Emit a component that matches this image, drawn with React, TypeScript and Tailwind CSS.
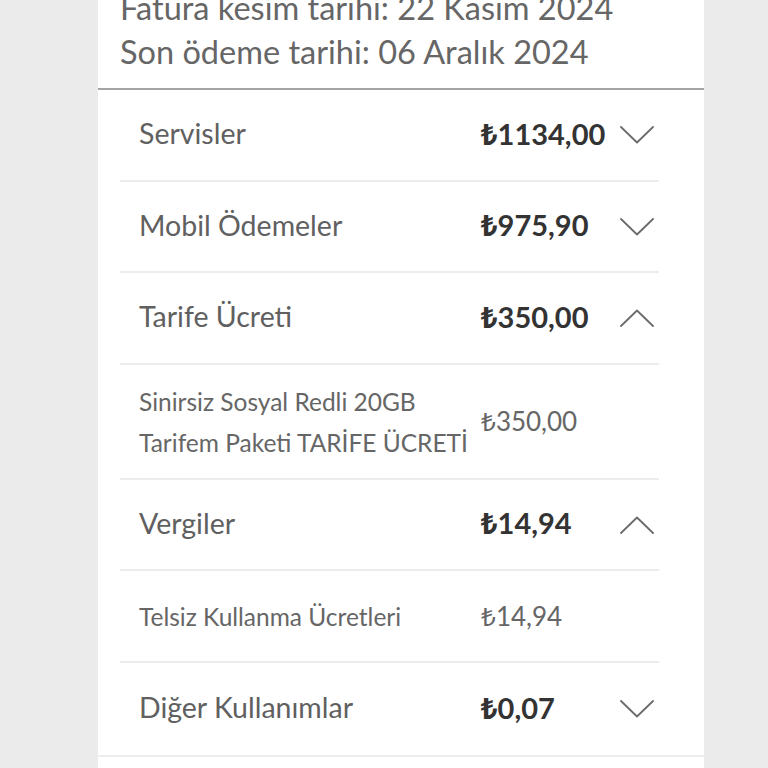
import React from "react";

type Row = {
  label: string;
  amount: string;
  open?: boolean;
  h: string;
  sub?: boolean;
};

const ROWS: Row[] = [
  { label: "Servisler", amount: "1134,00", h: "h-[92px]" },
  { label: "Mobil Ödemeler", amount: "975,90", h: "h-[91px]" },
  { label: "Tarife Ücreti", amount: "350,00", open: true, h: "h-[92px]" },
  { label: "Sinirsiz Sosyal Redli 20GB\nTarifem Paketi TARİFE ÜCRETİ", amount: "350,00", sub: true, h: "h-[115px]" },
  { label: "Vergiler", amount: "14,94", open: true, h: "h-[91px]" },
  { label: "Telsiz Kullanma Ücretleri", amount: "14,94", sub: true, h: "h-[92px]" },
  { label: "Diğer Kullanımlar", amount: "0,07", h: "h-[92px]" },
];

function Chevron({ up }: { up?: boolean }) {
  return (
    <svg width="34" height="18" viewBox="0 0 34 18" fill="none" className="block">
      <path
        d={up ? "M1 17L17 1.5L33 17" : "M1 1L17 16.5L33 1"}
        stroke="#6b6b6b"
        strokeWidth="1.8"
        strokeLinecap="round"
        strokeLinejoin="round"
      />
    </svg>
  );
}

function Lira() {
  return <span className="font-['Noto_Sans',sans-serif]">₺</span>;
}

export default function App() {
  return (
    <div className="h-[768px] overflow-hidden bg-[#ebebeb] font-['Lato','Liberation_Sans',sans-serif]">
      <div className="ml-[98px] w-[606px] min-h-[800px] bg-white">
        {/* Header dates */}
        <div className="-mt-[14px] border-b-2 border-[#a3a3a3] pb-[14px] pl-[22px] text-[32.5px] leading-[44px] text-[#666]">
          <p>Fatura kesim tarihi: 22 Kasım 2024</p>
          <p>Son ödeme tarihi: 06 Aralık 2024</p>
        </div>

        {/* Bill rows */}
        <div className="border-b-2 border-[#ededed]">
          <div className="ml-[22px] mr-[45px]">
            {ROWS.map((r, i) => (
              <div
                key={i}
                className={`grid grid-cols-[361px_1fr_34px] items-center pr-[5px] ${r.h} ${
                  i < ROWS.length - 1 ? "border-b-2 border-[#ececec]" : ""
                }`}
              >
                {r.sub ? (
                  <div className="whitespace-pre-line pl-[19px] text-[24.5px] leading-[41px] text-[#666]">
                    {r.label}
                  </div>
                ) : (
                  <div className="-mt-[3px] pl-[19px] text-[28.5px] text-[#606060]">{r.label}</div>
                )}
                {r.sub ? (
                  <div className="text-[26px] text-[#666]">
                    <Lira />
                    {r.amount}
                  </div>
                ) : (
                  <div className="-mt-[3px] text-[29px] font-bold text-[#333]">
                    <Lira />
                    {r.amount}
                  </div>
                )}
                <div>{!r.sub && <Chevron up={r.open} />}</div>
              </div>
            ))}
          </div>
        </div>
      </div>
    </div>
  );
}
